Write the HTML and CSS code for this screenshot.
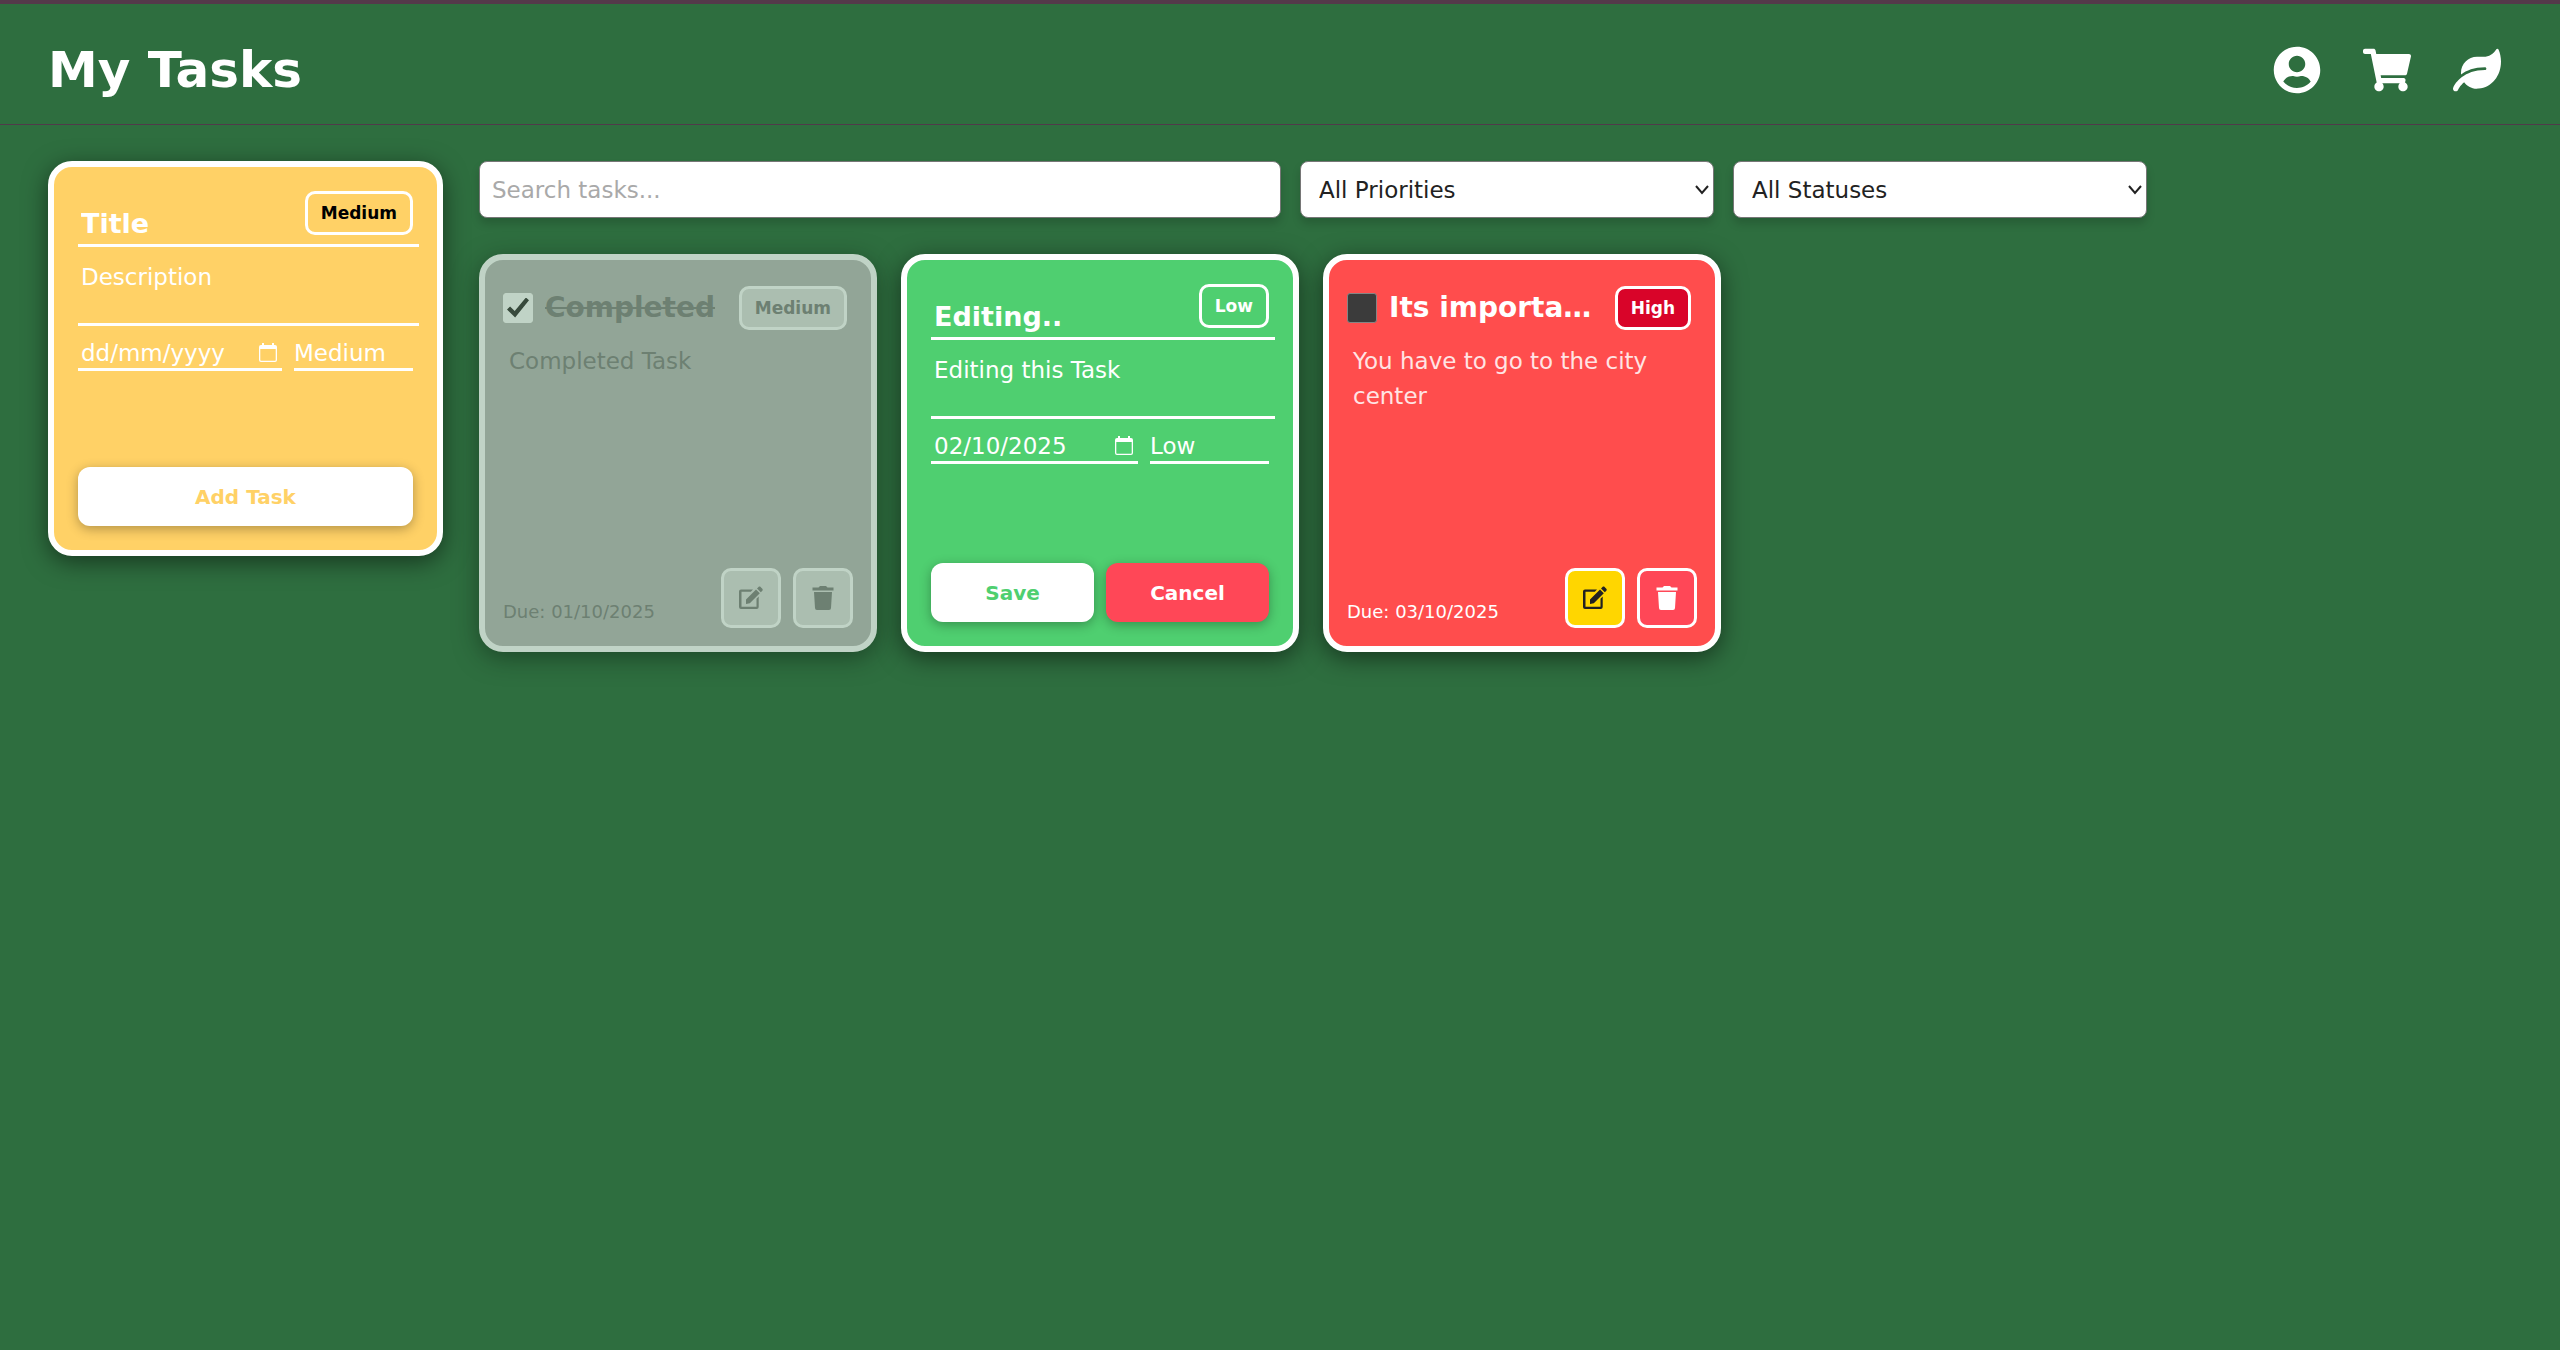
FILE: index.html
```html
<!DOCTYPE html>
<html lang="en">
<head>
<meta charset="utf-8">
<title>My Tasks</title>
<meta name="viewport" content="width=device-width, initial-scale=1">
<link rel="stylesheet" href="styles.css">
</head>
<body>
<svg class="sprite" aria-hidden="true">
  <symbol id="calendar" viewBox="0 0 20 20"><path fill="currentColor" d="M4 0h2v2h8V0h2v2h1a2 2 0 0 1 2 2v13a2 2 0 0 1-2 2H3a2 2 0 0 1-2-2V4a2 2 0 0 1 2-2h1zM2.300 6v11q0 .7.700.7h14q.700 0 .7-.7V6z"/></symbol>
  <symbol id="edit" viewBox="0 0 24 24"><path fill="currentColor" d="M2 3.500h12l-2.200 2.200H2.500v15h15v-8l2.200-2.200V21a2 2 0 0 1-2 2H2a2 2 0 0 1-2-2V5.500a2 2 0 0 1 2-2z"/><path fill="currentColor" d="M7 18v-4.500L17 3.500l3.800 3.800L10.800 17.300 7 18zM18 2.500l1.500-1.500c.6-.6 1.500-.6 2.100 0l1.700 1.700c.6.6.6 1.500 0 2.100L21.800 6.300z"/></symbol>
  <symbol id="trash" viewBox="0 0 24 24"><path fill="currentColor" d="M1.500 1.500h6L9 0h6l1.500 1.500h6v3h-21zM3 6h18l-1 16a2 2 0 0 1-2 2H6a2 2 0 0 1-2-2z"/></symbol>
</svg>
<header class="topbar">
  <h1 class="brand">My Tasks</h1>
  <nav class="nav">
    <a class="nav-link" href="#profile" aria-label="Profile"><svg viewBox="0 0 496 512"><path fill="currentColor" d="M248 8C111 8 0 119 0 256s111 248 248 248 248-111 248-248S385 8 248 8zm0 96c48.600 0 88 39.400 88 88s-39.400 88-88 88-88-39.400-88-88 39.400-88 88-88zm0 344c-58.700 0-111.300-26.600-146.500-68.200 18.800-35.400 55.600-59.800 98.500-59.800 2.400 0 4.800.4 7.100 1.100 13 4.200 26.600 6.900 40.900 6.900 14.300 0 28-2.700 40.900-6.900 2.300-.7 4.700-1.100 7.100-1.100 42.900 0 79.700 24.400 98.500 59.800C359.300 421.400 306.700 448 248 448z"/></svg></a>
    <a class="nav-link" href="#shop" aria-label="Shop"><svg viewBox="0 0 576 512"><path fill="currentColor" d="M528.120 301.319l47.273-208C578.806 78.301 567.391 64 551.990 64H159.208l-9.166-44.810C147.758 8.021 137.930 0 126.529 0H24C10.745 0 0 10.745 0 24v16c0 13.255 10.745 24 24 24h69.883l70.248 343.435C147.325 417.100 136 435.222 136 456c0 30.928 25.072 56 56 56s56-25.072 56-56c0-15.674-6.447-29.835-16.824-40h209.647C430.447 426.165 424 440.326 424 456c0 30.928 25.072 56 56 56s56-25.072 56-56c0-22.172-12.888-41.332-31.579-50.405l5.517-24.276c3.413-15.018-8.002-29.319-23.403-29.319H218.117l-6.545-32h293.145c11.206 0 20.920-7.754 23.403-18.681z"/></svg></a>
    <a class="nav-link" href="#garden" aria-label="Garden"><svg viewBox="0 0 576 512"><path fill="currentColor" d="M546.200 9.700c-5.600-12.500-21.600-13-28.300-1.200C486.900 62.400 431.400 96 368 96h-80C182 96 96 182 96 288c0 7 .8 13.700 1.500 20.500C161.300 262.800 253.400 224 384 224c8.800 0 16 7.200 16 16s-7.200 16-16 16C132.600 256 26 410.100 2.400 468c-6.600 16.300 1.200 34.900 17.500 41.600 16.400 6.800 35-1.100 41.800-17.300 1.500-3.600 20.900-47.900 71.900-90.600 32.400 43.900 94 85.800 174.900 77.200C465.500 467.500 576 326.700 576 154.300c0-50.200-10.800-102.200-29.800-144.600z"/></svg></a>
  </nav>
</header>
<main class="page">
  <form class="card form-card medium">
    <span class="badge">Medium</span>
    <input class="field title-field" type="text" placeholder="Title" aria-label="Title">
    <textarea class="field text-field" placeholder="Description" aria-label="Description"></textarea>
    <div class="field-row">
      <div class="field date-field">
        <input type="text" placeholder="dd/mm/yyyy" aria-label="Due date">
        <svg class="calendar" aria-hidden="true"><use href="#calendar"/></svg>
      </div>
      <select class="field priority-field" aria-label="Priority"><option>Low</option><option selected>Medium</option><option>High</option></select>
    </div>
    <div class="actions"><button class="btn" type="button">Add Task</button></div>
  </form>
  <section class="board">
    <div class="filters">
      <input class="filter search" type="text" placeholder="Search tasks..." aria-label="Search tasks">
      <select class="filter" aria-label="Filter by priority"><option>All Priorities</option></select>
      <select class="filter" aria-label="Filter by status"><option>All Statuses</option></select>
    </div>
    <div class="tasks">
      <article class="card task done">
        <div class="task-head">
          <input class="check" type="checkbox" checked aria-label="Completed">
          <h2 class="task-title">Completed</h2>
          <span class="badge">Medium</span>
        </div>
        <p class="task-text">Completed Task</p>
        <div class="task-foot">
          <span class="due">Due: 01/10/2025</span>
          <button class="icon-btn edit" type="button" aria-label="Edit"><svg><use href="#edit"/></svg></button>
          <button class="icon-btn delete" type="button" aria-label="Delete"><svg><use href="#trash"/></svg></button>
        </div>
      </article>
      <form class="card form-card low">
        <span class="badge">Low</span>
        <input class="field title-field" type="text" value="Editing.." aria-label="Title">
        <textarea class="field text-field" aria-label="Description">Editing this Task</textarea>
        <div class="field-row">
          <div class="field date-field">
            <input type="text" value="02/10/2025" aria-label="Due date">
            <svg class="calendar" aria-hidden="true"><use href="#calendar"/></svg>
          </div>
          <select class="field priority-field" aria-label="Priority"><option selected>Low</option><option>Medium</option><option>High</option></select>
        </div>
        <div class="actions"><button class="btn" type="button">Save</button><button class="btn cancel" type="button">Cancel</button></div>
      </form>
      <article class="card task high">
        <div class="task-head">
          <input class="check" type="checkbox" aria-label="Its importa…">
          <h2 class="task-title">Its importa…</h2>
          <span class="badge">High</span>
        </div>
        <p class="task-text">You have to go to the city center</p>
        <div class="task-foot">
          <span class="due">Due: 03/10/2025</span>
          <button class="icon-btn edit" type="button" aria-label="Edit"><svg><use href="#edit"/></svg></button>
          <button class="icon-btn delete" type="button" aria-label="Delete"><svg><use href="#trash"/></svg></button>
        </div>
      </article>
    </div>
  </section>
</main>
</body>
</html>
```
FILE: styles.css
```css
* { box-sizing: border-box; }

body {
  margin: 0;
  min-height: 100vh;
  background: #2e6e3f;
  border-top: 4px solid #54394a;
  color: #fff;
  font-family: "DejaVu Sans", sans-serif;
  font-size: 23px;
}

input, textarea, select, button { font: inherit; color: inherit; }

.sprite { display: none; }

.topbar {
  display: flex;
  align-items: center;
  justify-content: space-between;
  height: 121px;
  padding: 12px 59px 0 48px;
  border-bottom: 1px solid #503a4a;
}

.brand { margin: 0; font-size: 50px; line-height: 56px; }

.nav { display: flex; gap: 42px; }
.nav-link { display: flex; color: #fff; }
.nav-link svg { width: 48px; height: 48px; }

.page {
  display: flex;
  align-items: flex-start;
  gap: 36px;
  padding: 36px 48px;
}

.board { flex: 1; max-width: 1668px; }

.card {
  position: relative;
  display: flex;
  flex-direction: column;
  min-width: 0;
  aspect-ratio: 1;
  border: 6px solid #fff;
  border-radius: 24px;
  box-shadow: 0 6px 24px rgba(0, 0, 0, .5);
}

.page > .card { flex: 0 0 395px; }

.medium { background: #ffd166; --tone: #ffd166; --badge-text: #000; }
.low { background: #4fcf70; --tone: #4fcf70; --badge-text: #fff; }
.high { background: #ff4d4d; --tone: #d90429; --badge-text: #fff; }

.badge {
  flex: none;
  padding: 0 13px;
  border: 3px solid #fff;
  border-radius: 10px;
  background: var(--tone);
  color: var(--badge-text);
  font-size: 17px;
  font-weight: bold;
  line-height: 38px;
}

.form-card { padding: 36px 24px 24px; }
.form-card .badge { position: absolute; top: 24px; right: 24px; }

.field {
  display: block;
  padding: 0 3px;
  border: 0;
  border-bottom: 3px solid #fff;
  border-radius: 0;
  background: transparent;
  outline: 0;
  resize: none;
  overflow: hidden;
}
.field::placeholder, .field input::placeholder { color: #fff; opacity: 1; }

.title-field { width: calc(100% + 6px); height: 44px; font-size: 27px; font-weight: bold; }
.text-field { width: calc(100% + 6px); height: 67px; margin-top: 12px; padding-top: 1px; line-height: 35px; }

.field-row { display: flex; gap: 12px; margin-top: 12px; }
.date-field { flex: 1; min-width: 0; display: flex; align-items: center; height: 33px; padding-right: 4px; }
.date-field input { flex: 1; min-width: 0; padding: 0; border: 0; background: none; outline: 0; }
.calendar { flex: none; width: 20px; height: 20px; }
.priority-field { width: 119px; height: 33px; padding: 0; appearance: none; }

.actions { display: flex; gap: 12px; margin-top: auto; }
.btn {
  flex: 1;
  height: 59px;
  border: 0;
  border-radius: 12px;
  background: #fff;
  color: var(--tone);
  font-size: 20px;
  font-weight: bold;
  box-shadow: 0 3px 12px rgba(0, 0, 0, .3);
}
.cancel { background: #ff4757; color: #fff; }

.filters { display: grid; grid-template-columns: 1fr 414px 414px; gap: 19px; }
.filter {
  min-width: 0;
  height: 57px;
  padding: 0 12px;
  border: 1px solid #767676;
  border-radius: 8px;
  background: #fff;
  color: #222;
  box-shadow: 0 6px 9px rgba(0, 0, 0, .15);
}
select.filter {
  padding: 0 28px 0 18px;
  appearance: none;
  background: #fff url("data:image/svg+xml,%3Csvg xmlns='http://www.w3.org/2000/svg' width='14' height='10'%3E%3Cpath d='M1 1l6 7 6-7' fill='none' stroke='%23222' stroke-width='2'/%3E%3C/svg%3E") no-repeat right 4px center;
}
.search::placeholder { color: #a9a9a9; opacity: 1; }

.tasks {
  display: grid;
  grid-template-columns: repeat(auto-fill, 398px);
  gap: 24px;
  margin-top: 36px;
}

.task { padding: 25px 18px 18px; }
.task-head { display: flex; align-items: center; gap: 12px; padding-right: 6px; }
.task-title {
  flex: 1;
  min-width: 0;
  margin: 0;
  overflow: hidden;
  font-size: 28px;
  line-height: 45px;
  text-overflow: ellipsis;
  white-space: nowrap;
}
.task-text { margin: 14px 6px 0; line-height: 35px; opacity: .85; }

.check {
  display: grid;
  place-items: center;
  flex: none;
  width: 30px;
  height: 30px;
  margin: 0;
  appearance: none;
  border: 1px solid #858585;
  border-radius: 3px;
  background: #3b3b3b;
}
.check:checked { border-color: #fff; background: #fff; }
.check:checked::before {
  content: "";
  width: 22px;
  height: 20px;
  background: #3b3b3b;
  clip-path: polygon(0 60%, 14% 45%, 35% 67%, 86% 0, 100% 14%, 37% 100%);
}

.task-foot { display: flex; align-items: flex-end; gap: 12px; margin-top: auto; }
.due { flex: 1; font-size: 18px; line-height: 32px; white-space: nowrap; }
.icon-btn {
  display: grid;
  place-items: center;
  width: 60px;
  height: 60px;
  padding: 0;
  border: 3px solid #fff;
  border-radius: 10px;
}
.icon-btn svg { width: 24px; height: 24px; }
.edit { background: #ffd600; color: #222; }
.delete { background: #ff4757; color: #fff; }

.done { background: #bdbdbd; border-color: #fff; color: #888; opacity: .7; }
.done .task-title { text-decoration: line-through; }
.done .task-text { opacity: 1; }
.done .badge, .done .icon-btn { background: #e0e0e0; color: #888; }
```
